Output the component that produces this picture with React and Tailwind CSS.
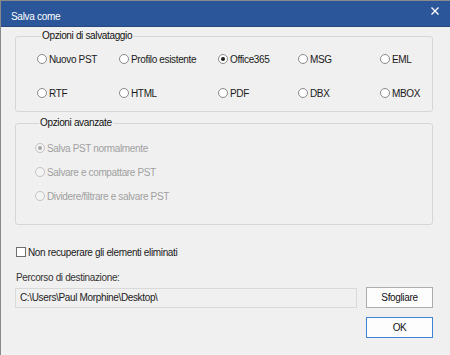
import React from "react";

const FONT = { fontFamily: '"Liberation Sans", Arial, sans-serif' };

function Radio({ label, checked = false, disabled = false }) {
  return (
    <div className={`flex items-center gap-[2px] h-[14px] ${disabled ? "text-[#a0a0a0]" : "text-[#1a1a1a]"}`}>
      <span
        className={`w-[10px] h-[10px] rounded-full border flex items-center justify-center shrink-0 ${
          disabled ? "border-[#c4c4c4] bg-[#f4f4f4]" : "border-[#8a8a8a] bg-white"
        }`}
      >
        {checked && (
          <span className={`w-[4px] h-[4px] rounded-full ${disabled ? "bg-[#a6a6a6]" : "bg-[#1e1e1e]"}`} />
        )}
      </span>
      <span className="whitespace-nowrap">{label}</span>
    </div>
  );
}

export default function App() {
  const row1 = ["Nuovo PST", "Profilo esistente", "Office365", "MSG", "EML"];
  const row2 = ["RTF", "HTML", "PDF", "DBX", "MBOX"];
  return (
    <div
      className="w-[450px] h-[355px] bg-[#f0f0f0] border-l border-t border-[#8a8a8a] overflow-hidden flex flex-col text-[10px] tracking-[-0.35px]"
      style={FONT}
    >
      <div className="h-[26px] shrink-0 bg-[#2b579a] border-b border-[#24497f] flex items-center justify-between pl-[10px] pr-[11px] text-white">
        <span className="text-[10px] tracking-[-0.3px] mt-[6px]">Salva come</span>
        <svg width="8" height="8" viewBox="0 0 8 8" className="mb-[6px]">
          <path d="M0.5 0.5 L7.5 7.5 M7.5 0.5 L0.5 7.5" stroke="white" strokeWidth="1.4" />
        </svg>
      </div>

      <div className="flex flex-col pl-[14px] pr-[17px]">
        <fieldset className="mt-[3px] border border-[#d6d6d6] rounded-[3px] pl-[21px] pt-[10px] pb-[11px]">
          <legend className="ml-[4px] px-[1px] leading-[12px] text-[#111]">Opzioni di salvataggio</legend>
          <div className="grid grid-cols-[82px_99px_80px_82px_auto] gap-y-[20px]">
            {row1.map((l) => (
              <Radio key={l} label={l} checked={l === "Office365"} />
            ))}
            {row2.map((l) => (
              <Radio key={l} label={l} />
            ))}
          </div>
        </fieldset>

        <fieldset className="mt-[5px] border border-[#d6d6d6] rounded-[3px] pl-[19px] pt-[12px] pb-[21px]">
          <legend className="ml-[4px] px-[1px] leading-[12px] text-[#111]">Opzioni avanzate</legend>
          <div className="flex flex-col gap-[10px]">
            <Radio label="Salva PST normalmente" checked disabled />
            <Radio label="Salvare e compattare PST" disabled />
            <Radio label="Dividere/filtrare e salvare PST" disabled />
          </div>
        </fieldset>

        <div className="mt-[20px] h-[14px] flex items-center gap-[2px] pl-[1px] text-[#1a1a1a]">
          <span className="w-[10px] h-[10px] border border-[#6e6e6e] bg-white shrink-0" />
          <span>Non recuperare gli elementi eliminati</span>
        </div>

        <div className="mt-[11px] h-[14px] flex items-center pl-[1px] text-[#333]">Percorso di destinazione:</div>

        <div className="mt-[3px] flex items-center gap-[9px]">
          <div className="flex-1 h-[20px] bg-[#f0f0f0] border border-[#d9d9d9] flex items-center pl-[4px] text-[#222]">
            C:\Users\Paul Morphine\Desktop\
          </div>
          <button className="w-[67px] h-[21px] bg-[#fdfdfd] border border-[#adadad] text-[#111] flex items-center justify-center">
            Sfogliare
          </button>
        </div>

        <div className="mt-[9px] flex justify-end">
          <button className="w-[67px] h-[21px] bg-[#fdfdfd] border border-[#3d84d6] text-[#111] flex items-center justify-center">
            OK
          </button>
        </div>
      </div>
    </div>
  );
}
